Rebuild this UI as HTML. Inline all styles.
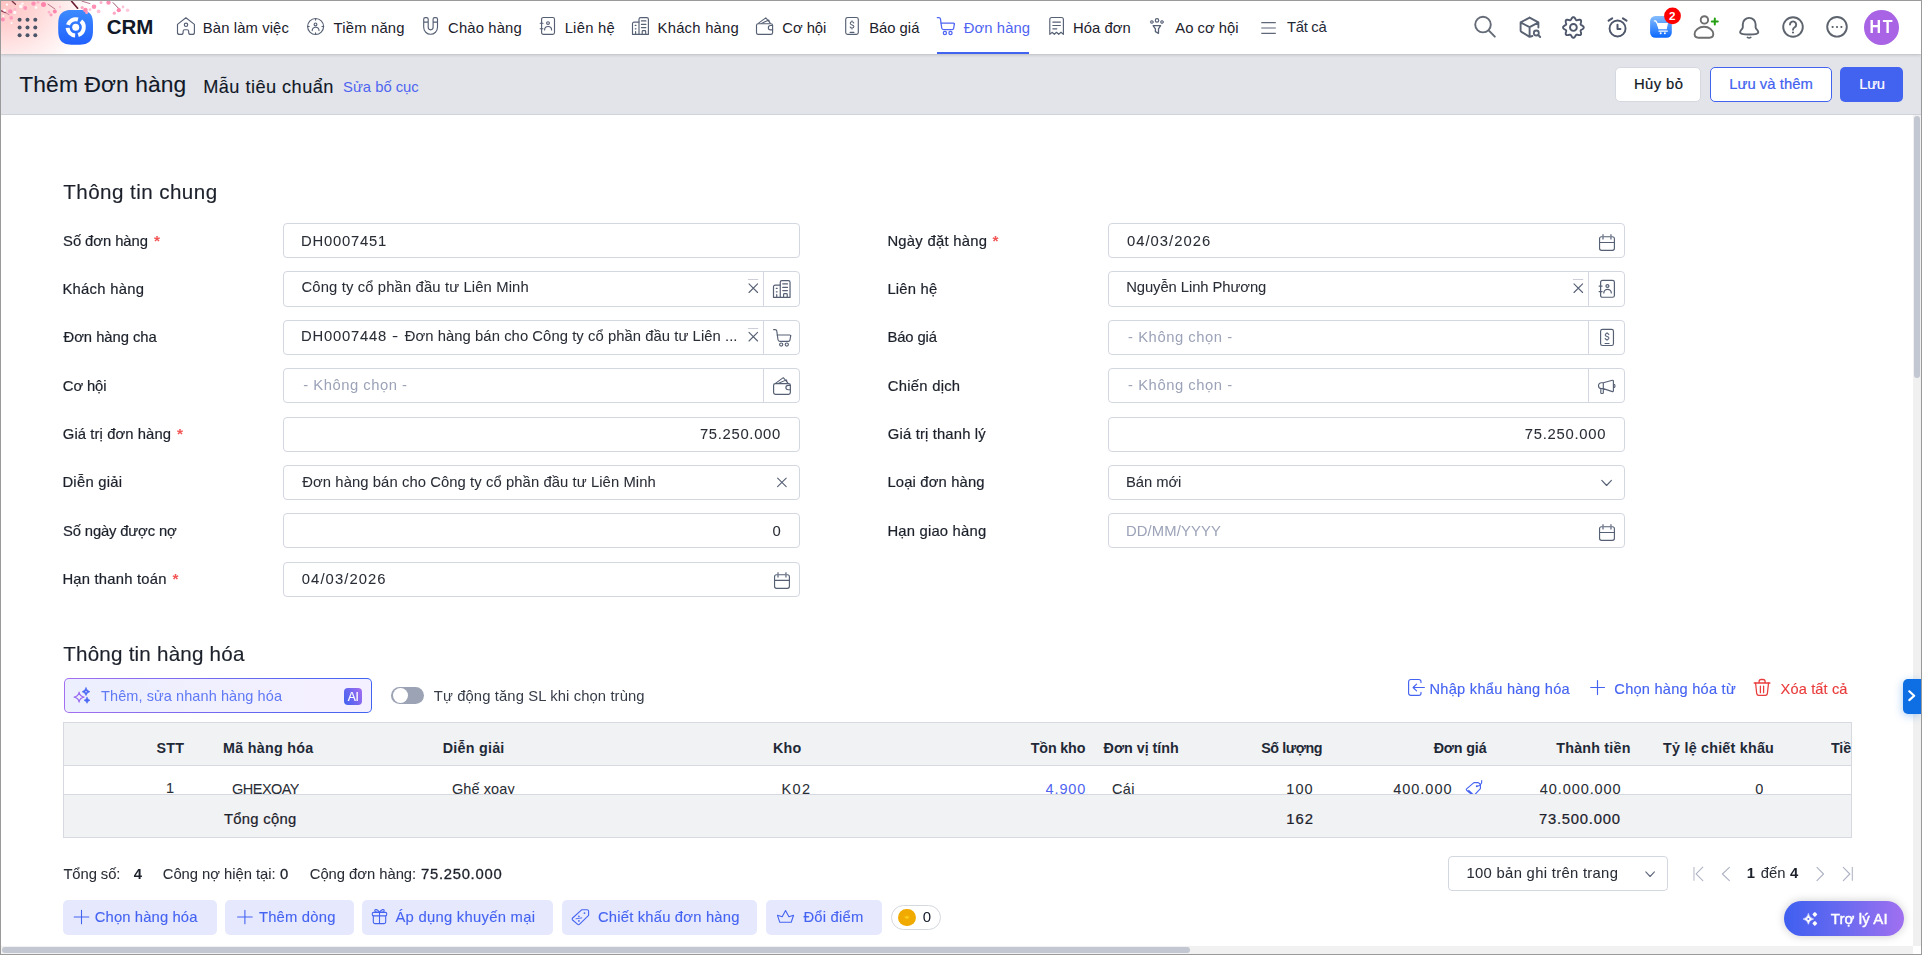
<!DOCTYPE html>
<html lang="vi">
<head>
<meta charset="utf-8">
<title>Thêm Đơn hàng - CRM</title>
<style>
html,body{margin:0;padding:0;background:#fff;}
body{width:1922px;height:955px;overflow:hidden;font-family:"Liberation Sans",Arial,sans-serif;color:#1f2937;}
#app{position:relative;width:1922px;height:955px;overflow:hidden;background:#fff;}
#boxes>*,#icons>*,#texts>*,#texts2>*{position:absolute;box-sizing:border-box;}
#texts>span,#texts2>span{white-space:nowrap;line-height:20px;height:20px;display:block;}
#texts2{position:absolute;left:0;top:0;width:1922px;height:955px;will-change:transform;}
#icons>svg{display:block;overflow:visible;}
#frame{position:absolute;left:0;top:0;width:1922px;height:955px;box-sizing:border-box;border:1px solid #9a9a9a;pointer-events:none;}
.inp{background:#fff;border:1px solid #d3d7e0;border-radius:4px;}
.inp i{position:absolute;top:0;bottom:0;width:1px;background:#d3d7e0;}
.btnl{background:#e6e9fd;border-radius:5px;}

</style>
</head>
<body>
<div id="app">
<div id="boxes">
<header style="left:1px;top:54px;width:1920px;height:61px;background:#e2e4e9;border-bottom:1px solid #cfd3da;"></header>
<nav style="left:1px;top:1px;width:1920px;height:53px;background:#fff;box-shadow:0 1px 3px rgba(0,0,0,.16),0 0 1px rgba(0,0,0,.12);"></nav>
<div style="left:1px;top:1px;width:120px;height:53px;background:radial-gradient(ellipse 92px 78px at 0 0,#ffc2c2 0%,#ffd3d3 35%,#ffe6e6 62%,rgba(255,240,240,0) 100%);"></div>
<div style="left:937px;top:52px;width:92px;height:2px;background:#4262f0;"></div>
<div style="left:1615px;top:67px;width:86px;height:35px;background:#fff;border:1px solid #d5d8de;border-radius:5px;"></div>
<div style="left:1710px;top:67px;width:122px;height:35px;background:#fff;border:1px solid #4262f0;border-radius:5px;"></div>
<div style="left:1840px;top:67px;width:63px;height:35px;background:#4262f0;border-radius:5px;"></div>
<div style="left:1913px;top:115px;width:8px;height:839px;background:#f0f0f0;"></div>
<div style="left:1914px;top:116px;width:6px;height:262px;background:#c3c7d1;border-radius:3px;"></div>
<div style="left:1px;top:946px;width:1912px;height:8px;background:#f1f1f1;"></div>
<div style="left:2px;top:947px;width:1188px;height:6px;background:#c3c7d1;border-radius:3px;"></div>
<div style="left:1913px;top:946px;width:8px;height:8px;background:#fff;"></div>
<div class="inp" style="left:283px;top:223px;width:517px;height:35px;"></div>
<div class="inp" style="left:283px;top:271px;width:517px;height:36px;"><i style="left:479px"></i></div>
<div class="inp" style="left:283px;top:320px;width:517px;height:35px;"><i style="left:479px"></i></div>
<div class="inp" style="left:283px;top:368px;width:517px;height:35px;"><i style="left:479px"></i></div>
<div class="inp" style="left:283px;top:417px;width:517px;height:35px;"></div>
<div class="inp" style="left:283px;top:465px;width:517px;height:35px;"></div>
<div class="inp" style="left:283px;top:513px;width:517px;height:35px;"></div>
<div class="inp" style="left:283px;top:562px;width:517px;height:35px;"></div>
<div class="inp" style="left:1108px;top:223px;width:517px;height:35px;"></div>
<div class="inp" style="left:1108px;top:271px;width:517px;height:36px;"><i style="left:479px"></i></div>
<div class="inp" style="left:1108px;top:320px;width:517px;height:35px;"><i style="left:479px"></i></div>
<div class="inp" style="left:1108px;top:368px;width:517px;height:35px;"><i style="left:479px"></i></div>
<div class="inp" style="left:1108px;top:417px;width:517px;height:35px;"></div>
<div class="inp" style="left:1108px;top:465px;width:517px;height:35px;"></div>
<div class="inp" style="left:1108px;top:513px;width:517px;height:35px;"></div>
<div style="left:64px;top:678px;width:308px;height:35px;border-radius:5px;background:linear-gradient(90deg,#a36ff0 0%,#3f63f0 100%);"><div style="position:absolute;left:1.2px;top:1.2px;right:1.2px;bottom:1.2px;border-radius:4px;background:linear-gradient(90deg,#eceffe,#f5f0ff);"></div></div>
<div style="left:344px;top:688px;width:18px;height:17px;border-radius:4px;background:linear-gradient(65deg,#3f63f0,#a56cf0);"></div>
<div style="left:391px;top:687px;width:33px;height:17px;border-radius:9px;background:#9ca3b4;"><div style="position:absolute;left:1.5px;top:1px;width:15px;height:15px;border-radius:50%;background:#fff;"></div></div>
<div style="left:63px;top:722px;width:1789px;height:116px;border:1px solid #d6d9e0;background:#fff;"></div>
<div style="left:64px;top:723px;width:1787px;height:43px;background:#f1f2f4;border-bottom:1px solid #d6d9e0;"></div>
<div style="left:64px;top:794px;width:1787px;height:43px;background:#f1f2f4;border-top:1px solid #d6d9e0;"></div>
<div class="inp" style="left:1448px;top:856px;width:220px;height:35px;"></div>
<div class="btnl" style="left:63px;top:900px;width:154px;height:35px;"></div>
<div class="btnl" style="left:225px;top:900px;width:129px;height:35px;"></div>
<div class="btnl" style="left:362px;top:900px;width:191px;height:35px;"></div>
<div class="btnl" style="left:562px;top:900px;width:195px;height:35px;"></div>
<div class="btnl" style="left:766px;top:900px;width:116px;height:35px;"></div>
<div style="left:891px;top:905px;width:50px;height:25px;border:1px solid #d5d8de;border-radius:13px;background:#fff;"></div>
<div style="left:898px;top:908.5px;width:17.8px;height:17.8px;border-radius:50%;background:radial-gradient(circle at 50% 50%,#f2ac00 0,#f0a900 70%,#ffcb05 78%,#ffcf10 100%);"></div>
<div style="left:1784px;top:901px;width:120px;height:35px;border-radius:18px;background:linear-gradient(90deg,#3f5ff0 0%,#6a6af0 50%,#a070f0 100%);box-shadow:0 0 10px rgba(0,0,0,.2);"></div>
<div style="left:1903px;top:679px;width:18px;height:35px;background:#0d6fe3;border-radius:5px 0 0 5px;box-shadow:-1px 2px 8px rgba(13,111,227,.3);"></div>
<div style="left:1864px;top:10px;width:35px;height:35px;border-radius:50%;background:#a864e4;"></div>
</div>
<div id="icons">
<svg style="left:0;top:0" width="1922" height="955" viewBox="0 0 1922 955" fill="none" stroke-linecap="round" stroke-linejoin="round"><circle cx="19.6" cy="19.7" r="2.0" stroke="none" stroke-width="1.15" fill="#4b5568" />
<circle cx="27.5" cy="19.7" r="2.0" stroke="none" stroke-width="1.15" fill="#4b5568" />
<circle cx="35.3" cy="19.7" r="2.0" stroke="none" stroke-width="1.15" fill="#4b5568" />
<circle cx="19.6" cy="27.5" r="2.0" stroke="none" stroke-width="1.15" fill="#4b5568" />
<circle cx="27.5" cy="27.5" r="2.0" stroke="none" stroke-width="1.15" fill="#4b5568" />
<circle cx="35.3" cy="27.5" r="2.0" stroke="none" stroke-width="1.15" fill="#4b5568" />
<circle cx="19.6" cy="35.3" r="2.0" stroke="none" stroke-width="1.15" fill="#4b5568" />
<circle cx="27.5" cy="35.3" r="2.0" stroke="none" stroke-width="1.15" fill="#4b5568" />
<circle cx="35.3" cy="35.3" r="2.0" stroke="none" stroke-width="1.15" fill="#4b5568" />
<defs><linearGradient id="lg" x1="0" y1="0" x2="0" y2="1"><stop offset="0" stop-color="#3d8bff"/><stop offset="1" stop-color="#2161ff"/></linearGradient><linearGradient id="cg" x1="0" y1="0" x2="0" y2="1"><stop offset="0" stop-color="#86bdff"/><stop offset="1" stop-color="#0a68ff"/></linearGradient></defs>
<path d="M93.00 27.30 L92.95 31.56 L92.80 33.76 L92.54 35.52 L92.18 37.02 L91.72 38.33 L91.16 39.49 L90.49 40.51 L89.70 41.40 L88.81 42.19 L87.79 42.86 L86.63 43.42 L85.32 43.88 L83.82 44.24 L82.06 44.50 L79.86 44.65 L75.60 44.70 L71.34 44.65 L69.14 44.50 L67.38 44.24 L65.88 43.88 L64.57 43.42 L63.41 42.86 L62.39 42.19 L61.50 41.40 L60.71 40.51 L60.04 39.49 L59.48 38.33 L59.02 37.02 L58.66 35.52 L58.40 33.76 L58.25 31.56 L58.20 27.30 L58.25 23.04 L58.40 20.84 L58.66 19.08 L59.02 17.58 L59.48 16.27 L60.04 15.11 L60.71 14.09 L61.50 13.20 L62.39 12.41 L63.41 11.74 L64.57 11.18 L65.88 10.72 L67.38 10.36 L69.14 10.10 L71.34 9.95 L75.60 9.90 L79.86 9.95 L82.06 10.10 L83.82 10.36 L85.32 10.72 L86.63 11.18 L87.79 11.74 L88.81 12.41 L89.70 13.20 L90.49 14.09 L91.16 15.11 L91.72 16.27 L92.18 17.58 L92.54 19.08 L92.80 20.84 L92.95 23.04Z" stroke="none" stroke-width="1.15" fill="url(#lg)" />
<path d="M80.91 21.10 A8.1 8.1 0 0 1 78.20 35.00" stroke="#fff" stroke-width="4.0" fill="none" stroke-linecap="butt"/>
<path d="M75.13 35.38 A8.1 8.1 0 0 1 67.62 27.87" stroke="#fff" stroke-width="4.0" fill="none" stroke-linecap="butt"/>
<path d="M67.95 24.93 A8.1 8.1 0 0 1 77.93 19.51" stroke="#fff" stroke-width="4.0" fill="none" stroke-linecap="butt"/>
<circle cx="75.7" cy="27.3" r="3.5" stroke="none" stroke-width="1.15" fill="#fff" />
<defs><filter id="bl" x="-50%" y="-50%" width="200%" height="200%"><feGaussianBlur stdDeviation="0.75"/></filter></defs>
<g filter="url(#bl)" stroke-linecap="round">
<line x1="12.2" y1="1.2" x2="15.5" y2="4.2" stroke="#7a3245" stroke-width="1.3"/>
<line x1="0.8" y1="10.6" x2="5.5" y2="12.6" stroke="#8a3b55" stroke-width="1.2"/>
<line x1="71.6" y1="1.2" x2="77.6" y2="8.2" stroke="#6b1f33" stroke-width="1.7"/>
<line x1="82" y1="1.2" x2="90" y2="3.6" stroke="#b06a82" stroke-width="0.9"/>
<line x1="113" y1="2.6" x2="119" y2="8.8" stroke="#a05a74" stroke-width="1.0"/>
<line x1="48" y1="4.2" x2="55" y2="9" stroke="#b06a82" stroke-width="0.9"/>
<line x1="5.5" y1="12.6" x2="9" y2="14.6" stroke="#b57088" stroke-width="0.8"/>
<circle cx="33.5" cy="3.6" r="2.2" fill="#ff8fb4"/>
<circle cx="43.5" cy="4.6" r="2.5" fill="#ff82ab"/>
<circle cx="25.2" cy="8" r="2.0" fill="#ff94b8"/>
<circle cx="10.2" cy="11.4" r="2.2" fill="#ff8fb4"/>
<circle cx="11.2" cy="17.8" r="1.9" fill="#ff9dbd"/>
<circle cx="2.8" cy="19.6" r="2.0" fill="#ff8fb4"/>
<circle cx="54.8" cy="11.4" r="2.0" fill="#ff86ad"/>
<circle cx="51" cy="14.8" r="1.6" fill="#ff9dbd"/>
<circle cx="85.4" cy="10" r="2.3" fill="#ff86ad"/>
<circle cx="94" cy="6.8" r="2.3" fill="#ff8fb4"/>
<circle cx="108.5" cy="2.6" r="2.2" fill="#ff8fb4"/>
<circle cx="118.8" cy="10.2" r="2.1" fill="#ff86ad"/>
<circle cx="114.3" cy="13.2" r="1.6" fill="#ffa6c3"/>
<circle cx="98.6" cy="11.4" r="1.9" fill="#ffc1d5"/>
<circle cx="127.6" cy="10.2" r="1.8" fill="#ffc9da"/>
<circle cx="82.2" cy="7.6" r="1.6" fill="#ffa6c3"/>
<circle cx="86.6" cy="12.6" r="1.5" fill="#ff9dbd"/>
<circle cx="123" cy="7" r="1.4" fill="#ffc1d5"/>
<circle cx="49" cy="12.2" r="1.4" fill="#ffb3cb"/>
<circle cx="60" cy="7" r="1.3" fill="#ffc9da"/>
<circle cx="38" cy="2.2" r="1.5" fill="#ffb3cb"/>
<circle cx="101" cy="2.4" r="1.5" fill="#ffb3cb"/>
<circle cx="90" cy="9.6" r="1.4" fill="#ffc1d5"/>
<circle cx="15" cy="9.4" r="1.3" fill="#ffb3cb"/>
<circle cx="20.8" cy="6.4" r="1.8" fill="#fff" fill-opacity=".9"/>
<circle cx="14.8" cy="12.4" r="1.6" fill="#fff" fill-opacity=".9"/>
<circle cx="4.6" cy="10.4" r="1.4" fill="#fff" fill-opacity=".9"/>
<circle cx="36" cy="7.6" r="1.3" fill="#fff" fill-opacity=".9"/>
<circle cx="7" cy="4.6" r="1.2" fill="#fff" fill-opacity=".9"/>
<circle cx="11.6" cy="23" r="1.0" fill="#fff" fill-opacity=".9"/>
<circle cx="3.4" cy="16" r="1.0" fill="#fff" fill-opacity=".9"/>
<circle cx="22.5" cy="3.6" r="1.2" fill="#fff" fill-opacity=".9"/>
</g>
<path d="M177.5 24.4 L185.9 17.8 L194.4 24.4 V32.4 a2 2 0 0 1 -2 2 h-1.7 a2 2 0 0 1 -2 -2 v-1 a1.7 1.7 0 0 0 -1.7 -1.7 h-2.2 a1.7 1.7 0 0 0 -1.7 1.7 v1 a2 2 0 0 1 -2 2 h-1.6 a2 2 0 0 1 -2 -2 Z" stroke="#566074" stroke-width="1.15" fill="none" />
<circle cx="186" cy="24.8" r="1.7" stroke="#566074" stroke-width="1.15" fill="none" />
<circle cx="315.6" cy="26.5" r="8.0" stroke="#566074" stroke-width="1.15" fill="none" />
<path d="M315.6 18.5 v1.6 M315.6 34.5 v-1.6 M307.6 26.5 h1.6 M323.6 26.5 h-1.6" stroke="#566074" stroke-width="1.15" fill="none" />
<circle cx="315.5" cy="24.4" r="1.4" stroke="#566074" stroke-width="1.15" fill="none" />
<path d="M312.2 30.6 a3.4 3.4 0 0 1 6.8 0" stroke="#566074" stroke-width="1.15" fill="none" />
<path d="M423.7 19.3 a1.6 1.6 0 0 1 1.6 -1.6 h1.3 a1.6 1.6 0 0 1 1.6 1.6 V27.35 a2.45 2.45 0 0 0 4.9 0 V19.3 a1.6 1.6 0 0 1 1.6 -1.6 h1.2 a1.6 1.6 0 0 1 1.6 1.6 V27.35 a6.9 6.9 0 0 1 -13.8 0 Z M423.7 22.1 h4.5 M433.1 22.1 h4.4" stroke="#566074" stroke-width="1.15" fill="none" />
<g transform="translate(541.60 17.50)"><rect x="0" y="0" width="12.9" height="16.9" rx="1.8" stroke="#566074" stroke-width="1.15" fill="none" /><path d="M-1.4 5.7 h2.8 M-1.4 11.2 h2.8" stroke="#566074" stroke-width="1.15" fill="none" /><circle cx="6.4" cy="5.6" r="1.4" stroke="#566074" stroke-width="1.15" fill="none" /><path d="M3 12.5 a3.5 3.5 0 0 1 7 0" stroke="#566074" stroke-width="1.15" fill="none" /></g>
<g transform="translate(632.50 17.60)"><path d="M6.5 16.8 V1.6 a1.6 1.6 0 0 1 1.6 -1.6 h6.2 a1.6 1.6 0 0 1 1.6 1.6 V16.8 Z" stroke="#566074" stroke-width="1.15" fill="none" /><path d="M6.5 4.5 h-5 a1.5 1.5 0 0 0 -1.5 1.5 V16.8 H6.5" stroke="#566074" stroke-width="1.15" fill="none" /><path d="M8.9 3.3 h4.5 M8.9 6.8 h4.5 M8.9 10 h4.5" stroke="#566074" stroke-width="1.15" fill="none" /><path d="M9.7 16.8 v-3 a.8 .8 0 0 1 .8 -.8 h1.9 a.8 .8 0 0 1 .8 .8 v3" stroke="#566074" stroke-width="1.15" fill="none" /><path d="M2.7 7.8 h.8 M2.7 11.2 h.8 M3.1 14 v2.6" stroke="#566074" stroke-width="1.15" fill="none" /></g>
<g transform="translate(756.50 17.70)"><rect x="0" y="6" width="16.1" height="10.7" rx="1.7" stroke="#566074" stroke-width="1.15" fill="none" /><path d="M1.8 5.7 L9.3 0.1 L13.8 5.5 M4.9 5.7 L12.3 2.3 L13.3 5.3" stroke="#566074" stroke-width="1.035" fill="none" /><path d="M16.1 7.8 h-2.1 a2.15 2.15 0 0 0 0 4.3 h2.1" stroke="#566074" stroke-width="1.15" fill="none" /></g>
<g transform="translate(845.70 17.50)"><rect x="0" y="0" width="12.6" height="16.9" rx="1.9" stroke="#566074" stroke-width="1.15" fill="none" /><path d="M8.1 5.5 c-.3 -.8 -1 -1.2 -1.8 -1.2 c-1.1 0 -1.8 .6 -1.8 1.5 c0 2.2 3.7 1.1 3.7 3.3 c0 .9 -.8 1.5 -1.9 1.5 c-.9 0 -1.7 -.4 -1.9 -1.2 M6.3 3.3 v1 M6.3 10.6 v1" stroke="#566074" stroke-width="1.035" fill="none" /><path d="M4.4 14.8 h3.9" stroke="#566074" stroke-width="1.15" fill="none" /></g>
<g transform="translate(937.30 17.60)"><path d="M0 0 h1.6 a1.6 1.6 0 0 1 1.55 1.3 L4.4 10.4 a1.9 1.9 0 0 0 1.9 1.6 h8.5 a1.6 1.6 0 0 0 1.55 -1.3 L17.1 6" stroke="#5066f2" stroke-width="1.25" fill="none" /><path d="M3.6 5.5 h12.6 a.9 .9 0 0 1 .9 1" stroke="#5066f2" stroke-width="1.25" fill="none" /><circle cx="7.6" cy="15.3" r="1.6" stroke="#5066f2" stroke-width="1.25" fill="none" /><circle cx="13.2" cy="15.3" r="1.6" stroke="#5066f2" stroke-width="1.25" fill="none" /></g>
<path d="M1049.8 34.4 V19.5 a2 2 0 0 1 2 -2 h9.6 a2 2 0 0 1 2 2 V34.4 L1061 32.3 L1058.7 34.3 L1056.5 32.3 L1054.3 34.3 L1052.1 32.3 Z" stroke="#566074" stroke-width="1.15" fill="none" />
<path d="M1052.8 22.1 h7.6 M1052.8 25.5 h7.6 M1052.8 28.8 h4" stroke="#566074" stroke-width="1.15" fill="none" />
<circle cx="1157" cy="20.4" r="1.7" stroke="#566074" stroke-width="1.15" fill="none" />
<circle cx="1151.8" cy="22" r="1.5" stroke="#7c8496" stroke-width="1.0" fill="#9aa1b0" />
<circle cx="1162" cy="22" r="1.5" stroke="#7c8496" stroke-width="1.0" fill="#9aa1b0" />
<path d="M1153.1 25.7 H1160.6 L1158.5 28.9 V33.3 L1155.4 31.7 V28.9 Z" stroke="#566074" stroke-width="1.3" fill="none" />
<path d="M1261.3 22.6 h14.5 M1261.3 28 h14.5 M1261.3 33.4 h14.5" stroke="#5f677a" stroke-width="1.2" fill="none" stroke-linecap="butt"/>
<circle cx="1483" cy="24.6" r="7.8" stroke="#656c78" stroke-width="1.9" fill="none" />
<path d="M1488.7 30.4 L1494.8 36.6" stroke="#656c78" stroke-width="2.0" fill="none" />
<path d="M1529.6 17.6 L1538.4 22.4 V27.6 M1529.6 17.6 L1520.6 22.4 V30.6 a1.5 1.5 0 0 0 .8 1.3 L1529.6 36.9 L1532.4 36 M1520.9 22.6 L1529.6 27.2 L1538.2 22.6 M1529.6 27.2 V36.8" stroke="#596273" stroke-width="1.9" fill="none" />
<circle cx="1536.3" cy="33.0" r="2.5" stroke="#596273" stroke-width="1.8" fill="none" />
<path d="M1538.2 35 L1540.2 37" stroke="#596273" stroke-width="1.9" fill="none" />
<path d="M1583.75 27.45 L1583.68 27.85 L1583.48 28.24 L1583.17 28.61 L1582.77 28.93 L1582.33 29.23 L1581.87 29.48 L1581.45 29.72 L1581.09 29.95 L1580.82 30.19 L1580.65 30.45 L1580.58 30.76 L1580.61 31.12 L1580.70 31.54 L1580.83 32.00 L1580.97 32.51 L1581.07 33.03 L1581.12 33.54 L1581.09 34.02 L1580.96 34.43 L1580.72 34.77 L1580.38 35.01 L1579.97 35.14 L1579.49 35.17 L1578.98 35.12 L1578.46 35.02 L1577.95 34.88 L1577.49 34.75 L1577.07 34.66 L1576.71 34.63 L1576.40 34.70 L1576.14 34.87 L1575.90 35.14 L1575.67 35.50 L1575.43 35.92 L1575.18 36.38 L1574.88 36.82 L1574.56 37.22 L1574.19 37.53 L1573.80 37.73 L1573.40 37.80 L1573.00 37.73 L1572.61 37.53 L1572.24 37.22 L1571.92 36.82 L1571.62 36.38 L1571.37 35.92 L1571.13 35.50 L1570.90 35.14 L1570.66 34.87 L1570.40 34.70 L1570.09 34.63 L1569.73 34.66 L1569.31 34.75 L1568.85 34.88 L1568.34 35.02 L1567.82 35.12 L1567.31 35.17 L1566.83 35.14 L1566.42 35.01 L1566.08 34.77 L1565.84 34.43 L1565.71 34.02 L1565.68 33.54 L1565.73 33.03 L1565.83 32.51 L1565.97 32.00 L1566.10 31.54 L1566.19 31.12 L1566.22 30.76 L1566.15 30.45 L1565.98 30.19 L1565.71 29.95 L1565.35 29.72 L1564.93 29.48 L1564.47 29.23 L1564.03 28.93 L1563.63 28.61 L1563.32 28.24 L1563.12 27.85 L1563.05 27.45 L1563.12 27.05 L1563.32 26.66 L1563.63 26.29 L1564.03 25.97 L1564.47 25.67 L1564.93 25.42 L1565.35 25.18 L1565.71 24.95 L1565.98 24.71 L1566.15 24.45 L1566.22 24.14 L1566.19 23.78 L1566.10 23.36 L1565.97 22.90 L1565.83 22.39 L1565.73 21.87 L1565.68 21.36 L1565.71 20.88 L1565.84 20.47 L1566.08 20.13 L1566.42 19.89 L1566.83 19.76 L1567.31 19.73 L1567.82 19.78 L1568.34 19.88 L1568.85 20.02 L1569.31 20.15 L1569.73 20.24 L1570.09 20.27 L1570.40 20.20 L1570.66 20.03 L1570.90 19.76 L1571.13 19.40 L1571.37 18.98 L1571.62 18.52 L1571.92 18.08 L1572.24 17.68 L1572.61 17.37 L1573.00 17.17 L1573.40 17.10 L1573.80 17.17 L1574.19 17.37 L1574.56 17.68 L1574.88 18.08 L1575.18 18.52 L1575.43 18.98 L1575.67 19.40 L1575.90 19.76 L1576.14 20.03 L1576.40 20.20 L1576.71 20.27 L1577.07 20.24 L1577.49 20.15 L1577.95 20.02 L1578.46 19.88 L1578.98 19.78 L1579.49 19.73 L1579.97 19.76 L1580.38 19.89 L1580.72 20.13 L1580.96 20.47 L1581.09 20.88 L1581.12 21.36 L1581.07 21.87 L1580.97 22.39 L1580.83 22.90 L1580.70 23.36 L1580.61 23.78 L1580.58 24.14 L1580.65 24.45 L1580.82 24.71 L1581.09 24.95 L1581.45 25.18 L1581.87 25.42 L1582.33 25.67 L1582.77 25.97 L1583.17 26.29 L1583.48 26.66 L1583.68 27.05Z" stroke="#4d566a" stroke-width="1.9" fill="none" />
<circle cx="1573.4" cy="27.45" r="3.4" stroke="#4d566a" stroke-width="1.9" fill="none" />
<circle cx="1617.55" cy="28.5" r="8.0" stroke="#4d566a" stroke-width="1.9" fill="none" />
<path d="M1617.5 24.7 V28.9 H1620.4" stroke="#4d566a" stroke-width="2.0" fill="none" />
<path d="M1608.6 20.7 L1612.2 18.3 M1622.9 18.3 L1626.5 20.7" stroke="#4d566a" stroke-width="2.0" fill="none" />
<rect x="1650.1" y="16.1" width="21.7" height="21.7" rx="5.2" stroke="none" stroke-width="1.15" fill="url(#cg)" />
<path d="M1654.4 20.9 h1.3 l1.5 2.4 l1.8 5.4 h7.2 M1659 31.1 h8.3" stroke="#fff" stroke-width="1.3" fill="none" />
<path d="M1657 23.1 h11 l-1.2 5.9 h-7.8 Z" stroke="none" stroke-width="1.15" fill="#fff" />
<circle cx="1660.7" cy="33.3" r="1.0" stroke="none" stroke-width="1.15" fill="#fff" />
<circle cx="1664.9" cy="33.3" r="1.0" stroke="none" stroke-width="1.15" fill="#fff" />
<circle cx="1672.5" cy="15.9" r="8.4" stroke="none" stroke-width="1.15" fill="#ff0000" />
<circle cx="1704.4" cy="19.9" r="3.7" stroke="#6e6e6e" stroke-width="1.9" fill="none" />
<path d="M1694.6 34 C1694.6 30 1699 26.8 1704 26.8 C1709 26.8 1713.3 30 1713.3 34 C1713.3 36.4 1711.5 37.7 1709.5 37.7 H1698.4 C1696.4 37.7 1694.6 36.4 1694.6 34 Z" stroke="#6e6e6e" stroke-width="1.9" fill="none" />
<path d="M1711.8 21.5 h6 M1714.8 18.5 v6" stroke="#22a010" stroke-width="2.0" fill="none" />
<path d="M1742.8 24.3 a6.4 6.4 0 0 1 12.8 0 v3 c0 1.9 2.7 2.9 2.7 4.9 c0 1.5 -4.5 2.3 -9.1 2.3 s-9.1 -.8 -9.1 -2.3 c0 -2 2.7 -3 2.7 -4.9 Z" stroke="#5d646e" stroke-width="1.9" fill="none" />
<path d="M1747.4 37.4 q1.7 1.1 3.4 0" stroke="#5d646e" stroke-width="1.6" fill="none" />
<circle cx="1793" cy="27" r="9.8" stroke="#5d646e" stroke-width="1.9" fill="none" />
<path d="M1790 24.6 a3.1 3.1 0 1 1 4.7 2.6 c-1.1 .7 -1.7 1.2 -1.7 2.5" stroke="#5d646e" stroke-width="1.9" fill="none" />
<circle cx="1793" cy="32.5" r="1.1" stroke="none" stroke-width="1.15" fill="#5d646e" />
<circle cx="1837" cy="26.8" r="9.8" stroke="#5d646e" stroke-width="1.9" fill="none" />
<rect x="1831.6999999999998" y="26.1" width="1.8" height="1.8" rx="0.3" stroke="none" stroke-width="1.15" fill="#5d646e" />
<rect x="1836.1" y="26.1" width="1.8" height="1.8" rx="0.3" stroke="none" stroke-width="1.15" fill="#5d646e" />
<rect x="1840.5" y="26.1" width="1.8" height="1.8" rx="0.3" stroke="none" stroke-width="1.15" fill="#5d646e" />
<path d="M749.0 283.9 L757.5999999999999 292.5 M757.5999999999999 283.9 L749.0 292.5" stroke="#566074" stroke-width="1.1" fill="none" />
<path d="M748.3 279.5 h9.5" stroke="#c6cad3" stroke-width="0.9" fill="none" />
<path d="M749.0 332.4 L757.5999999999999 341.0 M757.5999999999999 332.4 L749.0 341.0" stroke="#566074" stroke-width="1.1" fill="none" />
<path d="M748.3 328.5 h9.5" stroke="#c6cad3" stroke-width="0.9" fill="none" />
<g transform="translate(773.50 280.60) scale(1.04 1.0)"><path d="M6.5 16.8 V1.6 a1.6 1.6 0 0 1 1.6 -1.6 h6.2 a1.6 1.6 0 0 1 1.6 1.6 V16.8 Z" stroke="#566074" stroke-width="1.15" fill="none" /><path d="M6.5 4.5 h-5 a1.5 1.5 0 0 0 -1.5 1.5 V16.8 H6.5" stroke="#566074" stroke-width="1.15" fill="none" /><path d="M8.9 3.3 h4.5 M8.9 6.8 h4.5 M8.9 10 h4.5" stroke="#566074" stroke-width="1.15" fill="none" /><path d="M9.7 16.8 v-3 a.8 .8 0 0 1 .8 -.8 h1.9 a.8 .8 0 0 1 .8 .8 v3" stroke="#566074" stroke-width="1.15" fill="none" /><path d="M2.7 7.8 h.8 M2.7 11.2 h.8 M3.1 14 v2.6" stroke="#566074" stroke-width="1.15" fill="none" /></g>
<g transform="translate(773.60 329.60) scale(1.0 0.98)"><path d="M0 0 h1.6 a1.6 1.6 0 0 1 1.55 1.3 L4.4 10.4 a1.9 1.9 0 0 0 1.9 1.6 h8.5 a1.6 1.6 0 0 0 1.55 -1.3 L17.1 6" stroke="#566074" stroke-width="1.15" fill="none" /><path d="M3.6 5.5 h12.6 a.9 .9 0 0 1 .9 1" stroke="#566074" stroke-width="1.15" fill="none" /><circle cx="7.6" cy="15.3" r="1.6" stroke="#566074" stroke-width="1.15" fill="none" /><circle cx="13.2" cy="15.3" r="1.6" stroke="#566074" stroke-width="1.15" fill="none" /></g>
<g transform="translate(773.60 377.60) scale(1.04 1.0)"><rect x="0" y="6" width="16.1" height="10.7" rx="1.7" stroke="#566074" stroke-width="1.15" fill="none" /><path d="M1.8 5.7 L9.3 0.1 L13.8 5.5 M4.9 5.7 L12.3 2.3 L13.3 5.3" stroke="#566074" stroke-width="1.035" fill="none" /><path d="M16.1 7.8 h-2.1 a2.15 2.15 0 0 0 0 4.3 h2.1" stroke="#566074" stroke-width="1.15" fill="none" /></g>
<path d="M777.6 478.09999999999997 L786.1999999999999 486.7 M786.1999999999999 478.09999999999997 L777.6 486.7" stroke="#566074" stroke-width="1.1" fill="none" />
<rect x="774.55" y="574.7" width="14.85" height="13.6" rx="2.0" stroke="#566074" stroke-width="1.15" fill="none" />
<path d="M774.55 580.4000000000001 h14.85" stroke="#566074" stroke-width="1.15" fill="none" />
<path d="M778.0 572.2 v5.3 M785.9499999999999 572.2 v5.3" stroke="#7b8397" stroke-width="1.5" fill="none" stroke-linecap="butt"/>
<rect x="1599.55" y="236.75" width="14.85" height="13.6" rx="2.0" stroke="#566074" stroke-width="1.15" fill="none" />
<path d="M1599.55 242.45 h14.85" stroke="#566074" stroke-width="1.15" fill="none" />
<path d="M1603.0 234.25 v5.3 M1610.95 234.25 v5.3" stroke="#7b8397" stroke-width="1.5" fill="none" stroke-linecap="butt"/>
<path d="M1574.0 283.9 L1582.6 292.5 M1582.6 283.9 L1574.0 292.5" stroke="#566074" stroke-width="1.1" fill="none" />
<path d="M1573.3 279.5 h9.5" stroke="#c6cad3" stroke-width="0.9" fill="none" />
<g transform="translate(1600.60 280.40) scale(1.07 1.0)"><rect x="0" y="0" width="12.9" height="16.9" rx="1.8" stroke="#566074" stroke-width="1.15" fill="none" /><path d="M-1.4 5.7 h2.8 M-1.4 11.2 h2.8" stroke="#566074" stroke-width="1.15" fill="none" /><circle cx="6.4" cy="5.6" r="1.4" stroke="#566074" stroke-width="1.15" fill="none" /><path d="M3 12.5 a3.5 3.5 0 0 1 7 0" stroke="#566074" stroke-width="1.15" fill="none" /></g>
<g transform="translate(1600.60 329.40) scale(1.02 0.955)"><rect x="0" y="0" width="12.6" height="16.9" rx="1.9" stroke="#566074" stroke-width="1.15" fill="none" /><path d="M8.1 5.5 c-.3 -.8 -1 -1.2 -1.8 -1.2 c-1.1 0 -1.8 .6 -1.8 1.5 c0 2.2 3.7 1.1 3.7 3.3 c0 .9 -.8 1.5 -1.9 1.5 c-.9 0 -1.7 -.4 -1.9 -1.2 M6.3 3.3 v1 M6.3 10.6 v1" stroke="#566074" stroke-width="1.035" fill="none" /><path d="M4.4 14.8 h3.9" stroke="#566074" stroke-width="1.15" fill="none" /></g>
<g transform="translate(1598.50 380.30)"><path d="M4.8 2.5 L13.9 0 a.8 .8 0 0 1 1 .8 V10.5 a.8 .8 0 0 1 -1 .8 L4.8 8.3 M4.8 2.5 h-1.9 a2.9 2.9 0 0 0 0 5.8 h1.9 M4.8 2.5 V8.3 M2.3 8.3 v4.2 a.7 .7 0 0 0 .7 .7 h1.1 a.7 .7 0 0 0 .7 -.7 V8.3 M14.9 4 a1.65 1.65 0 0 1 0 3.3" stroke="#566074" stroke-width="1.15" fill="none" /></g>
<path d="M1601.8 480.4 L1606.6 485.5 L1611.3999999999999 480.4" stroke="#566074" stroke-width="1.15" fill="none" />
<rect x="1599.55" y="526.75" width="14.85" height="13.6" rx="2.0" stroke="#566074" stroke-width="1.15" fill="none" />
<path d="M1599.55 532.45 h14.85" stroke="#566074" stroke-width="1.15" fill="none" />
<path d="M1603.0 524.25 v5.3 M1610.95 524.25 v5.3" stroke="#7b8397" stroke-width="1.5" fill="none" stroke-linecap="butt"/>
<path d="M79.1 692.1 Q79.8 696.4 84.1 697.1 Q79.8 697.8000000000001 79.1 702.1 Q78.39999999999999 697.8000000000001 74.1 697.1 Q78.39999999999999 696.4 79.1 692.1Z" stroke="#9a6cf2" stroke-width="1.1" fill="none" />
<path d="M86.0 687.8000000000001 Q86.78 690.9200000000001 89.9 691.7 Q86.78 692.48 86.0 695.6 Q85.22 692.48 82.1 691.7 Q85.22 690.9200000000001 86.0 687.8000000000001Z" stroke="#4a68f3" stroke-width="0.6" fill="#4a68f3" />
<path d="M87.0 697.3 Q87.6 699.6999999999999 90.0 700.3 Q87.6 700.9 87.0 703.3 Q86.4 700.9 84.0 700.3 Q86.4 699.6999999999999 87.0 697.3Z" stroke="#4a68f3" stroke-width="0.6" fill="#4a68f3" />
<circle cx="86.0" cy="691.7" r="0.8" stroke="none" stroke-width="1.15" fill="#dfe4ff" />
<path d="M1421 682.6 V681.7 a2.2 2.2 0 0 0 -2.2 -2.2 H1410.8 a2.2 2.2 0 0 0 -2.2 2.2 V693.2 a2.2 2.2 0 0 0 2.2 2.2 H1418.8 a2.2 2.2 0 0 0 2.2 -2.2 V692.2" stroke="#4563f1" stroke-width="1.15" fill="none" />
<path d="M1424.4 687.5 H1413.2 M1416.6 684.1 L1413.1 687.5 L1416.6 690.9" stroke="#4563f1" stroke-width="1.15" fill="none" />
<path d="M1590.7 687.5 H1604.5 M1597.5 680.6 V694.4" stroke="#4563f1" stroke-width="1.15" fill="none" />
<path d="M1754.2 683 H1769.9 M1759.1 683 V681.6 a2.1 2.1 0 0 1 2.1 -2.1 h1.8 a2.1 2.1 0 0 1 2.1 2.1 V683" stroke="#e93c3c" stroke-width="1.3" fill="none" />
<path d="M1755.6 683.2 L1756.7 693.4 a2.2 2.2 0 0 0 2.2 2 h6.3 a2.2 2.2 0 0 0 2.2 -2 L1768.5 683.2 M1760.4 686 V692.7 M1763.6 686 V692.7" stroke="#e93c3c" stroke-width="1.25" fill="none" />
<clipPath id="rowclip"><rect x="64" y="766" width="1787" height="28"/></clipPath>
<g clip-path="url(#rowclip)">
<path d="M1473.9 782.6 H1478.3 L1480.4 784.3 V788.6 L1473.5 796 L1466.6 790.2 a.9 .9 0 0 1 0 -1.3 Z M1468.7 790.4 L1473.2 794.6" stroke="#4563f1" stroke-width="1.15" fill="none" />
<path d="M1476.8 786.2 C1479.5 786 1482.3 784.2 1481.7 780.5" stroke="#4563f1" stroke-width="1.15" fill="none" />
<circle cx="1476.8" cy="786.2" r="1.0" stroke="none" stroke-width="1.15" fill="#4563f1" />
</g>
<path d="M74.2 917 H88.8 M81.5 910.3 V923.8" stroke="#4563f1" stroke-width="1.1" fill="none" />
<path d="M237.6 917 H252.2 M244.9 910.3 V923.8" stroke="#4563f1" stroke-width="1.1" fill="none" />
<rect x="372.3" y="912.4" width="14.4" height="3.5" rx="1.2" stroke="#4563f1" stroke-width="1.1" fill="none" />
<path d="M373.3 915.9 V921.8 a1.8 1.8 0 0 0 1.8 1.8 h8.8 a1.8 1.8 0 0 0 1.8 -1.8 V915.9 M379.5 912.4 V923.6" stroke="#4563f1" stroke-width="1.1" fill="none" />
<path d="M379.5 912.3 C377.5 909 374.8 909 374.8 910.8 C374.8 912 376.5 912.3 379.5 912.3 C382.5 912.3 384.2 912 384.2 910.8 C384.2 909 381.5 909 379.5 912.3" stroke="#4563f1" stroke-width="1.1" fill="none" />
<path d="M581.9 909.7 H587 a1.6 1.6 0 0 1 1.6 1.6 V915.4 L579.6 924.2 a1.6 1.6 0 0 1 -2.2 0 L572.6 920 a1.4 1.4 0 0 1 0 -2 Z" stroke="#4563f1" stroke-width="1.1" fill="none" />
<circle cx="584.5" cy="913.1" r="0.95" stroke="none" stroke-width="1.15" fill="#4563f1" />
<circle cx="578.9" cy="916.3" r="0.85" stroke="none" stroke-width="1.15" fill="#4563f1" />
<circle cx="578.9" cy="920.9" r="0.85" stroke="none" stroke-width="1.15" fill="#4563f1" />
<path d="M576 918.8 L581.8 917.9" stroke="#4563f1" stroke-width="0.9" fill="none" />
<path d="M777.5 915.3 L782.2 916.8 L785.55 910.5 L788.9 916.8 L793.6 915.3 L791.2 922.3 H779.8 Z" stroke="#4563f1" stroke-width="1.1" fill="none" />
<path d="M904.3 916 l1.2 2.6 h2.8 l1.2 -2.6 l-1.6 1 l-1 -1.8 l-1 1.8 z" stroke="none" stroke-width="1.15" fill="#ffd21e" />
<path d="M1702.8 867.2 L1696.1 873.9 L1702.8 880.6" stroke="#aeb3c4" stroke-width="1.1" fill="none" />
<path d="M1693.95 867.1 V880.8" stroke="#cfd2db" stroke-width="1.6" fill="none" stroke-linecap="butt"/>
<path d="M1729.4 867.3 L1722.4 874 L1729.4 880.7" stroke="#aeb3c4" stroke-width="1.1" fill="none" />
<path d="M1817 867.3 L1823.5 874 L1817 880.7" stroke="#aeb3c4" stroke-width="1.1" fill="none" />
<path d="M1843.3 867.3 L1849.8 874 L1843.3 880.7" stroke="#aeb3c4" stroke-width="1.1" fill="none" />
<path d="M1852.35 867.1 V880.8" stroke="#b9bdca" stroke-width="1.2" fill="none" stroke-linecap="butt"/>
<path d="M1645.8 871.9000000000001 L1650.1 876.5 L1654.3999999999999 871.9000000000001" stroke="#5f687c" stroke-width="1.1" fill="none" /></svg>
<svg style="left:0;top:0" width="1922" height="955" viewBox="0 0 1922 955" fill="none" stroke-linecap="round" stroke-linejoin="round"><path d="M1808.35 913.7 Q1809.1979999999999 918.152 1813.6499999999999 919 Q1809.1979999999999 919.848 1808.35 924.3 Q1807.502 919.848 1803.05 919 Q1807.502 918.152 1808.35 913.7Z" fill="#fff" stroke="#fff" stroke-width="0.5"/>
<circle cx="1808.35" cy="919" r="1.05" fill="#5a66f0"/>
<path d="M1814.85 912.1 Q1816.29 913.06 1817.25 914.5 Q1816.29 915.94 1814.85 916.9 Q1813.4099999999999 915.94 1812.4499999999998 914.5 Q1813.4099999999999 913.06 1814.85 912.1Z" fill="#fff"/>
<path d="M1814.85 921.1 Q1816.29 922.06 1817.25 923.5 Q1816.29 924.94 1814.85 925.9 Q1813.4099999999999 924.94 1812.4499999999998 923.5 Q1813.4099999999999 922.06 1814.85 921.1Z" fill="#fff"/>
<path d="M1909.3 691.3 L1914.2 695.7 L1909.3 700.1" stroke="#fff" stroke-width="2.2" fill="none"/></svg>
</div>
<div id="texts">
<span style="left:106.76px;top:16.90px;font-size:20.5px;font-weight:700;color:#111827;">CRM</span>
<span style="left:202.84px;top:17.67px;font-size:14.8px;letter-spacing:0.116px;color:#1c212b;">Bàn làm việc</span>
<span style="left:333.57px;top:17.67px;font-size:14.8px;letter-spacing:0.200px;color:#1c212b;">Tiềm năng</span>
<span style="left:448.11px;top:17.67px;font-size:14.8px;letter-spacing:0.140px;color:#1c212b;">Chào hàng</span>
<span style="left:564.64px;top:17.67px;font-size:14.8px;letter-spacing:0.266px;color:#1c212b;">Liên hệ</span>
<span style="left:657.54px;top:17.67px;font-size:14.8px;letter-spacing:0.255px;color:#1c212b;">Khách hàng</span>
<span style="left:782.31px;top:17.67px;font-size:14.8px;letter-spacing:-0.057px;color:#1c212b;">Cơ hội</span>
<span style="left:869.14px;top:17.67px;font-size:14.8px;letter-spacing:0.013px;color:#1c212b;">Báo giá</span>
<span style="left:963.80px;top:17.67px;font-size:14.8px;letter-spacing:0.082px;color:#4f65f1;">Đơn hàng</span>
<span style="left:1073.04px;top:17.67px;font-size:14.8px;letter-spacing:0.060px;color:#1c212b;">Hóa đơn</span>
<span style="left:1175.30px;top:17.67px;font-size:14.8px;color:#1c212b;">Ao cơ hội</span>
<span style="left:1286.97px;top:16.67px;font-size:14.8px;letter-spacing:-0.296px;">Tất cả</span>
<span style="left:19.34px;top:73.50px;font-size:22.8px;letter-spacing:0.090px;color:#111827;-webkit-text-stroke:0.1px;">Thêm Đơn hàng</span>
<span style="left:203.18px;top:76.89px;font-size:18.2px;letter-spacing:0.451px;color:#111827;-webkit-text-stroke:0.1px;">Mẫu tiêu chuẩn</span>
<span style="left:343.04px;top:77.37px;font-size:14.8px;color:#4f65f1;">Sửa bố cục</span>
<span style="left:1633.94px;top:73.87px;font-size:14.8px;letter-spacing:0.414px;color:#111827;-webkit-text-stroke:0.2px;">Hủy bỏ</span>
<span style="left:1729.24px;top:73.87px;font-size:14.8px;letter-spacing:0.040px;color:#4262f0;-webkit-text-stroke:0.22px;">Lưu và thêm</span>
<span style="left:1859.34px;top:73.87px;font-size:14.8px;letter-spacing:-0.344px;color:#fff;-webkit-text-stroke:0.22px;">Lưu</span>
<span style="left:156.58px;top:738.15px;font-size:14.3px;letter-spacing:0.168px;font-weight:700;">STT</span>
<span style="left:223.01px;top:738.15px;font-size:14.3px;letter-spacing:0.282px;font-weight:700;">Mã hàng hóa</span>
<span style="left:442.81px;top:738.15px;font-size:14.3px;letter-spacing:0.243px;font-weight:700;">Diễn giải</span>
<span style="left:772.91px;top:738.15px;font-size:14.3px;letter-spacing:0.329px;font-weight:700;">Kho</span>
<span style="left:1030.70px;top:738.15px;font-size:14.3px;letter-spacing:-0.139px;font-weight:700;">Tồn kho</span>
<span style="left:1103.60px;top:738.15px;font-size:14.3px;letter-spacing:-0.021px;font-weight:700;">Đơn vị tính</span>
<span style="left:1261.18px;top:738.15px;font-size:14.3px;letter-spacing:-0.396px;font-weight:700;">Số lượng</span>
<span style="left:1433.70px;top:738.15px;font-size:14.3px;letter-spacing:-0.158px;font-weight:700;">Đơn giá</span>
<span style="left:1556.30px;top:738.15px;font-size:14.3px;letter-spacing:0.202px;font-weight:700;">Thành tiền</span>
<span style="left:1663.10px;top:738.15px;font-size:14.3px;letter-spacing:0.230px;font-weight:700;">Tỷ lệ chiết khấu</span>
<span style="left:1830.90px;top:738.15px;font-size:14.3px;font-weight:700;width:20.10px;overflow:hidden;">Tiền</span>
<span style="left:165.89px;top:777.98px;font-size:14.5px;color:#292d36;-webkit-text-stroke:0.06px;clip-path:inset(0 0 3.98px 0);">1</span>
<span style="left:232.12px;top:779.28px;font-size:14.5px;letter-spacing:-0.536px;color:#292d36;-webkit-text-stroke:0.06px;clip-path:inset(0 0 5.28px 0);">GHEXOAY</span>
<span style="left:451.92px;top:779.28px;font-size:14.5px;letter-spacing:0.102px;color:#292d36;-webkit-text-stroke:0.06px;clip-path:inset(0 0 5.28px 0);">Ghế xoay</span>
<span style="left:781.57px;top:779.28px;font-size:14.5px;letter-spacing:1.303px;color:#292d36;-webkit-text-stroke:0.06px;clip-path:inset(0 0 5.28px 0);">K02</span>
<span style="left:1045.57px;top:779.28px;font-size:14.5px;letter-spacing:0.875px;color:#4f65f1;clip-path:inset(0 0 5.28px 0);">4.900</span>
<span style="left:1112.02px;top:779.28px;font-size:14.5px;letter-spacing:0.383px;color:#292d36;-webkit-text-stroke:0.06px;clip-path:inset(0 0 5.28px 0);">Cái</span>
<span style="left:1286.19px;top:779.28px;font-size:14.5px;letter-spacing:1.131px;color:#292d36;-webkit-text-stroke:0.06px;clip-path:inset(0 0 5.28px 0);">100</span>
<span style="left:1393.17px;top:779.28px;font-size:14.5px;letter-spacing:0.994px;color:#292d36;-webkit-text-stroke:0.06px;clip-path:inset(0 0 5.28px 0);">400.000</span>
<span style="left:1539.87px;top:779.28px;font-size:14.5px;letter-spacing:0.911px;color:#292d36;-webkit-text-stroke:0.06px;clip-path:inset(0 0 5.28px 0);">40.000.000</span>
<span style="left:1755.15px;top:779.28px;font-size:14.5px;color:#292d36;-webkit-text-stroke:0.06px;clip-path:inset(0 0 5.28px 0);">0</span>
<span style="left:223.97px;top:809.07px;font-size:14.8px;letter-spacing:0.292px;color:#1c212b;-webkit-text-stroke:0.22px;">Tổng cộng</span>
<span style="left:1286.17px;top:809.07px;font-size:14.8px;letter-spacing:1.012px;color:#1c212b;-webkit-text-stroke:0.22px;">162</span>
<span style="left:1538.91px;top:809.07px;font-size:14.8px;letter-spacing:0.767px;color:#1c212b;-webkit-text-stroke:0.22px;">73.500.000</span>
<span style="left:1869.50px;top:18.26px;font-size:16px;letter-spacing:1.786px;font-weight:700;color:#fff;transform:scaleY(1.12);transform-origin:0 15.54px;">HT</span>
<span style="left:1669.00px;top:5.98px;font-size:11.6px;font-weight:700;color:#fff;">2</span>
</div>
<div id="texts2">
<span style="left:63.23px;top:182.46px;font-size:20.6px;letter-spacing:0.441px;color:#1c212b;-webkit-text-stroke:0.15px;">Thông tin chung</span>
<span style="left:63.09px;top:231.27px;font-size:14.8px;letter-spacing:-0.062px;color:#1c212b;-webkit-text-stroke:0.2px;">Số đơn hàng</span>
<span style="left:153.90px;top:230.76px;font-size:15.4px;font-weight:700;color:#f25555;">*</span>
<span style="left:62.39px;top:279.27px;font-size:14.8px;letter-spacing:0.299px;color:#1c212b;-webkit-text-stroke:0.2px;">Khách hàng</span>
<span style="left:63.55px;top:327.17px;font-size:14.8px;letter-spacing:-0.037px;color:#1c212b;-webkit-text-stroke:0.2px;">Đơn hàng cha</span>
<span style="left:62.86px;top:376.17px;font-size:14.8px;letter-spacing:-0.117px;color:#1c212b;-webkit-text-stroke:0.2px;">Cơ hội</span>
<span style="left:62.86px;top:424.17px;font-size:14.8px;letter-spacing:0.090px;color:#1c212b;-webkit-text-stroke:0.2px;">Giá trị đơn hàng</span>
<span style="left:177.00px;top:423.66px;font-size:15.4px;font-weight:700;color:#f25555;">*</span>
<span style="left:62.39px;top:472.17px;font-size:14.8px;letter-spacing:0.268px;color:#1c212b;-webkit-text-stroke:0.2px;">Diễn giải</span>
<span style="left:63.09px;top:521.17px;font-size:14.8px;letter-spacing:-0.150px;color:#1c212b;-webkit-text-stroke:0.2px;">Số ngày được nợ</span>
<span style="left:62.39px;top:569.17px;font-size:14.8px;letter-spacing:0.223px;color:#1c212b;-webkit-text-stroke:0.2px;">Hạn thanh toán</span>
<span style="left:172.50px;top:568.66px;font-size:15.4px;font-weight:700;color:#f25555;">*</span>
<span style="left:887.39px;top:231.27px;font-size:14.8px;letter-spacing:0.278px;color:#1c212b;-webkit-text-stroke:0.2px;">Ngày đặt hàng</span>
<span style="left:992.60px;top:230.76px;font-size:15.4px;font-weight:700;color:#f25555;">*</span>
<span style="left:887.39px;top:279.27px;font-size:14.8px;letter-spacing:0.217px;color:#1c212b;-webkit-text-stroke:0.2px;">Liên hệ</span>
<span style="left:887.39px;top:327.17px;font-size:14.8px;letter-spacing:-0.089px;color:#1c212b;-webkit-text-stroke:0.2px;">Báo giá</span>
<span style="left:887.86px;top:376.17px;font-size:14.8px;letter-spacing:0.255px;color:#1c212b;-webkit-text-stroke:0.2px;">Chiến dịch</span>
<span style="left:887.86px;top:424.17px;font-size:14.8px;letter-spacing:0.159px;color:#1c212b;-webkit-text-stroke:0.2px;">Giá trị thanh lý</span>
<span style="left:887.39px;top:472.17px;font-size:14.8px;letter-spacing:0.158px;color:#1c212b;-webkit-text-stroke:0.2px;">Loại đơn hàng</span>
<span style="left:887.39px;top:521.17px;font-size:14.8px;letter-spacing:0.210px;color:#1c212b;-webkit-text-stroke:0.2px;">Hạn giao hàng</span>
<span style="left:301.09px;top:231.07px;font-size:14.8px;letter-spacing:0.784px;color:#292d36;-webkit-text-stroke:0.06px;">DH0007451</span>
<span style="left:301.56px;top:277.27px;font-size:14.8px;letter-spacing:0.134px;color:#292d36;-webkit-text-stroke:0.06px;">Công ty cổ phần đầu tư Liên Minh</span>
<span style="left:301.09px;top:326.27px;font-size:14.8px;letter-spacing:0.784px;color:#292d36;-webkit-text-stroke:0.06px;">DH0007448</span>
<span style="left:392.14px;top:326.27px;font-size:14.8px;color:#292d36;-webkit-text-stroke:0.06px;transform:scaleX(1.25);transform-origin:0 0;">-</span>
<span style="left:404.75px;top:326.27px;font-size:14.8px;letter-spacing:0.063px;color:#292d36;-webkit-text-stroke:0.06px;">Đơn hàng bán cho Công ty cổ phần đầu tư Liên ...</span>
<span style="left:303.19px;top:375.47px;font-size:14.8px;letter-spacing:0.517px;color:#9ca3b8;">- Không chọn -</span>
<span style="left:699.96px;top:424.07px;font-size:14.8px;letter-spacing:0.688px;color:#292d36;-webkit-text-stroke:0.06px;">75.250.000</span>
<span style="left:302.25px;top:472.17px;font-size:14.8px;letter-spacing:0.084px;color:#292d36;-webkit-text-stroke:0.06px;">Đơn hàng bán cho Công ty cổ phần đầu tư Liên Minh</span>
<span style="left:772.44px;top:520.77px;font-size:14.8px;color:#292d36;-webkit-text-stroke:0.06px;">0</span>
<span style="left:301.79px;top:569.07px;font-size:14.8px;letter-spacing:1.077px;color:#292d36;-webkit-text-stroke:0.06px;">04/03/2026</span>
<span style="left:1126.89px;top:231.07px;font-size:14.8px;letter-spacing:1.033px;color:#292d36;-webkit-text-stroke:0.06px;">04/03/2026</span>
<span style="left:1126.19px;top:277.27px;font-size:14.8px;letter-spacing:-0.075px;color:#292d36;-webkit-text-stroke:0.06px;">Nguyễn Linh Phương</span>
<span style="left:1128.09px;top:327.27px;font-size:14.8px;letter-spacing:0.541px;color:#9ca3b8;">- Không chọn -</span>
<span style="left:1128.09px;top:375.47px;font-size:14.8px;letter-spacing:0.541px;color:#9ca3b8;">- Không chọn -</span>
<span style="left:1524.76px;top:424.27px;font-size:14.8px;letter-spacing:0.733px;color:#292d36;-webkit-text-stroke:0.06px;">75.250.000</span>
<span style="left:1125.99px;top:472.17px;font-size:14.8px;letter-spacing:-0.071px;color:#292d36;-webkit-text-stroke:0.06px;">Bán mới</span>
<span style="left:1125.89px;top:520.87px;font-size:14.8px;letter-spacing:0.154px;color:#9ca3b8;">DD/MM/YYYY</span>
<span style="left:63.23px;top:644.26px;font-size:20.6px;letter-spacing:0.217px;color:#1c212b;-webkit-text-stroke:0.15px;">Thông tin hàng hóa</span>
<span style="left:101.12px;top:686.08px;font-size:14.5px;letter-spacing:0.080px;color:#6079f4;">Thêm, sửa nhanh hàng hóa</span>
<span style="left:347.75px;top:686.57px;font-size:12.2px;letter-spacing:-0.329px;color:#fff;-webkit-text-stroke:0.15px;">AI</span>
<span style="left:433.82px;top:686.47px;font-size:14.8px;letter-spacing:0.108px;color:#363c48;">Tự động tăng SL khi chọn trùng</span>
<span style="left:1429.51px;top:679.04px;font-size:14.6px;letter-spacing:0.278px;color:#4563f1;-webkit-text-stroke:0.15px;">Nhập khẩu hàng hóa</span>
<span style="left:1614.37px;top:679.04px;font-size:14.6px;letter-spacing:0.241px;color:#4563f1;-webkit-text-stroke:0.15px;">Chọn hàng hóa từ</span>
<span style="left:1780.62px;top:679.04px;font-size:14.6px;letter-spacing:0.124px;color:#e93c3c;-webkit-text-stroke:0.15px;">Xóa tất cả</span>
<span style="left:63.42px;top:864.07px;font-size:14.8px;letter-spacing:-0.074px;color:#292d36;-webkit-text-stroke:0.06px;">Tổng số:</span>
<span style="left:133.70px;top:864.07px;font-size:14.8px;font-weight:700;color:#1c212b;">4</span>
<span style="left:162.76px;top:864.07px;font-size:14.8px;letter-spacing:-0.027px;color:#292d36;-webkit-text-stroke:0.06px;">Công nợ hiện tại:</span>
<span style="left:280.04px;top:864.07px;font-size:14.8px;color:#1c212b;-webkit-text-stroke:0.3px;">0</span>
<span style="left:309.76px;top:864.07px;font-size:14.8px;letter-spacing:-0.028px;color:#292d36;-webkit-text-stroke:0.06px;">Cộng đơn hàng:</span>
<span style="left:420.96px;top:864.07px;font-size:14.8px;letter-spacing:0.733px;color:#1c212b;-webkit-text-stroke:0.3px;">75.250.000</span>
<span style="left:1466.53px;top:862.87px;font-size:14.8px;letter-spacing:0.312px;color:#292d36;-webkit-text-stroke:0.06px;">100 bản ghi trên trang</span>
<span style="left:1746.78px;top:862.87px;font-size:14.8px;font-weight:700;color:#1c212b;">1</span>
<span style="left:1760.69px;top:862.87px;font-size:14.8px;color:#292d36;-webkit-text-stroke:0.06px;">đến</span>
<span style="left:1790.00px;top:862.87px;font-size:14.8px;font-weight:700;color:#1c212b;">4</span>
<span style="left:94.76px;top:907.37px;font-size:14.8px;letter-spacing:0.124px;color:#4563f1;-webkit-text-stroke:0.12px;">Chọn hàng hóa</span>
<span style="left:258.92px;top:907.37px;font-size:14.8px;letter-spacing:0.200px;color:#4563f1;-webkit-text-stroke:0.12px;">Thêm dòng</span>
<span style="left:395.45px;top:907.37px;font-size:14.8px;letter-spacing:0.274px;color:#4563f1;-webkit-text-stroke:0.12px;">Áp dụng khuyến mại</span>
<span style="left:597.96px;top:907.37px;font-size:14.8px;letter-spacing:0.187px;color:#4563f1;-webkit-text-stroke:0.12px;">Chiết khấu đơn hàng</span>
<span style="left:803.45px;top:907.37px;font-size:14.8px;letter-spacing:0.210px;color:#4563f1;-webkit-text-stroke:0.12px;">Đổi điểm</span>
<span style="left:922.73px;top:906.50px;font-size:15px;color:#111827;">0</span>
<span style="left:1830.82px;top:908.70px;font-size:15px;letter-spacing:0.103px;color:#fff;-webkit-text-stroke:0.45px;">Trợ lý AI</span>
</div>
<div id="frame"></div>
</div>
</body>
</html>
